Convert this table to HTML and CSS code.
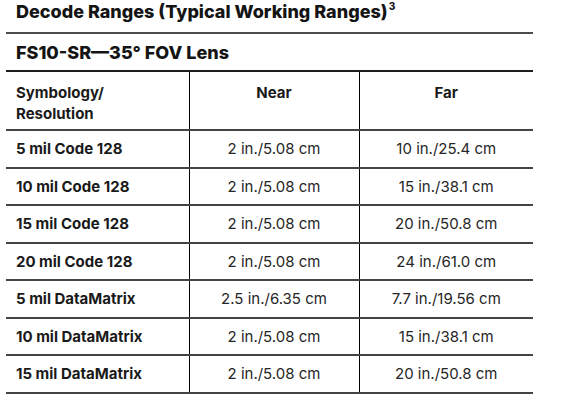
FILE: index.html
```html
<!DOCTYPE html>
<html lang="en">
<head>
<meta charset="utf-8">
<title>Decode Ranges</title>
<link rel="stylesheet" href="styles.css">
</head>
<body>
<div class="sheet">
  <h1 class="title">Decode Ranges (Typical Working Ranges)<sup>3</sup></h1>
  <h2 class="subtitle">FS10-SR—35° FOV Lens</h2>
  <table class="ranges">
    <colgroup>
      <col class="c1"><col class="c2"><col class="c3">
    </colgroup>
    <thead>
      <tr>
        <th class="sym">Symbology/<br>Resolution</th>
        <th>Near</th>
        <th>Far</th>
      </tr>
    </thead>
    <tbody>
      <tr><th class="sym">5 mil Code 128</th><td>2 in./5.08 cm</td><td>10 in./25.4 cm</td></tr>
      <tr><th class="sym">10 mil Code 128</th><td>2 in./5.08 cm</td><td>15 in./38.1 cm</td></tr>
      <tr><th class="sym">15 mil Code 128</th><td>2 in./5.08 cm</td><td>20 in./50.8 cm</td></tr>
      <tr><th class="sym">20 mil Code 128</th><td>2 in./5.08 cm</td><td>24 in./61.0 cm</td></tr>
      <tr><th class="sym">5 mil DataMatrix</th><td>2.5 in./6.35 cm</td><td>7.7 in./19.56 cm</td></tr>
      <tr><th class="sym">10 mil DataMatrix</th><td>2 in./5.08 cm</td><td>15 in./38.1 cm</td></tr>
      <tr><th class="sym">15 mil DataMatrix</th><td>2 in./5.08 cm</td><td>20 in./50.8 cm</td></tr>
    </tbody>
  </table>
</div>
</body>
</html>
```

FILE: styles.css
```css
html, body {
  margin: 0;
  padding: 0;
  background: #ffffff;
}

body {
  font-family: Inter, "Liberation Sans", sans-serif;
  color: #1a1a1a;
}

.sheet {
  width: 527px;
  margin-left: 6px;
}

.title {
  margin: 0;
  height: 34px;
  box-sizing: border-box;
  padding: 1px 0 0 10px;
  font-size: 18px;
  line-height: 22px;
  font-weight: 800;
  color: #141414;
  border-bottom: 2px solid #4d4d4d;
}

.title sup {
  font-size: 10px;
  line-height: 0;
  position: relative;
  top: -1px;
  margin-left: 1px;
  vertical-align: super;
}

.subtitle {
  margin: 0;
  height: 38px;
  box-sizing: border-box;
  padding: 8px 0 0 10px;
  font-size: 18px;
  line-height: 22px;
  font-weight: 800;
  color: #141414;
  border-bottom: 2px solid #1e1e1e;
}

.ranges {
  width: 100%;
  border-collapse: collapse;
  table-layout: fixed;
  font-size: 15px;
}

.c1 { width: 183px; }
.c2 { width: 170px; }
.c3 { width: 174px; }

.ranges th,
.ranges td {
  padding: 0 10px;
  border-bottom: 2px solid #444;
  text-align: center;
}

.ranges td {
  font-weight: 400;
  color: #262626;
}

.ranges th {
  font-weight: 700;
}

.ranges th + th,
.ranges th + td,
.ranges td + td {
  border-left: 1px solid #000;
}

.ranges thead th {
  height: 58px;
  vertical-align: top;
  padding-top: 10px;
  line-height: 21px;
  box-sizing: border-box;
}

.ranges tbody th,
.ranges tbody td {
  height: 35px;
  line-height: 20px;
  vertical-align: middle;
}

.ranges tbody tr:nth-child(odd) th,
.ranges tbody tr:nth-child(odd) td {
  height: 36px;
}

.ranges .sym {
  text-align: left;
}
```
